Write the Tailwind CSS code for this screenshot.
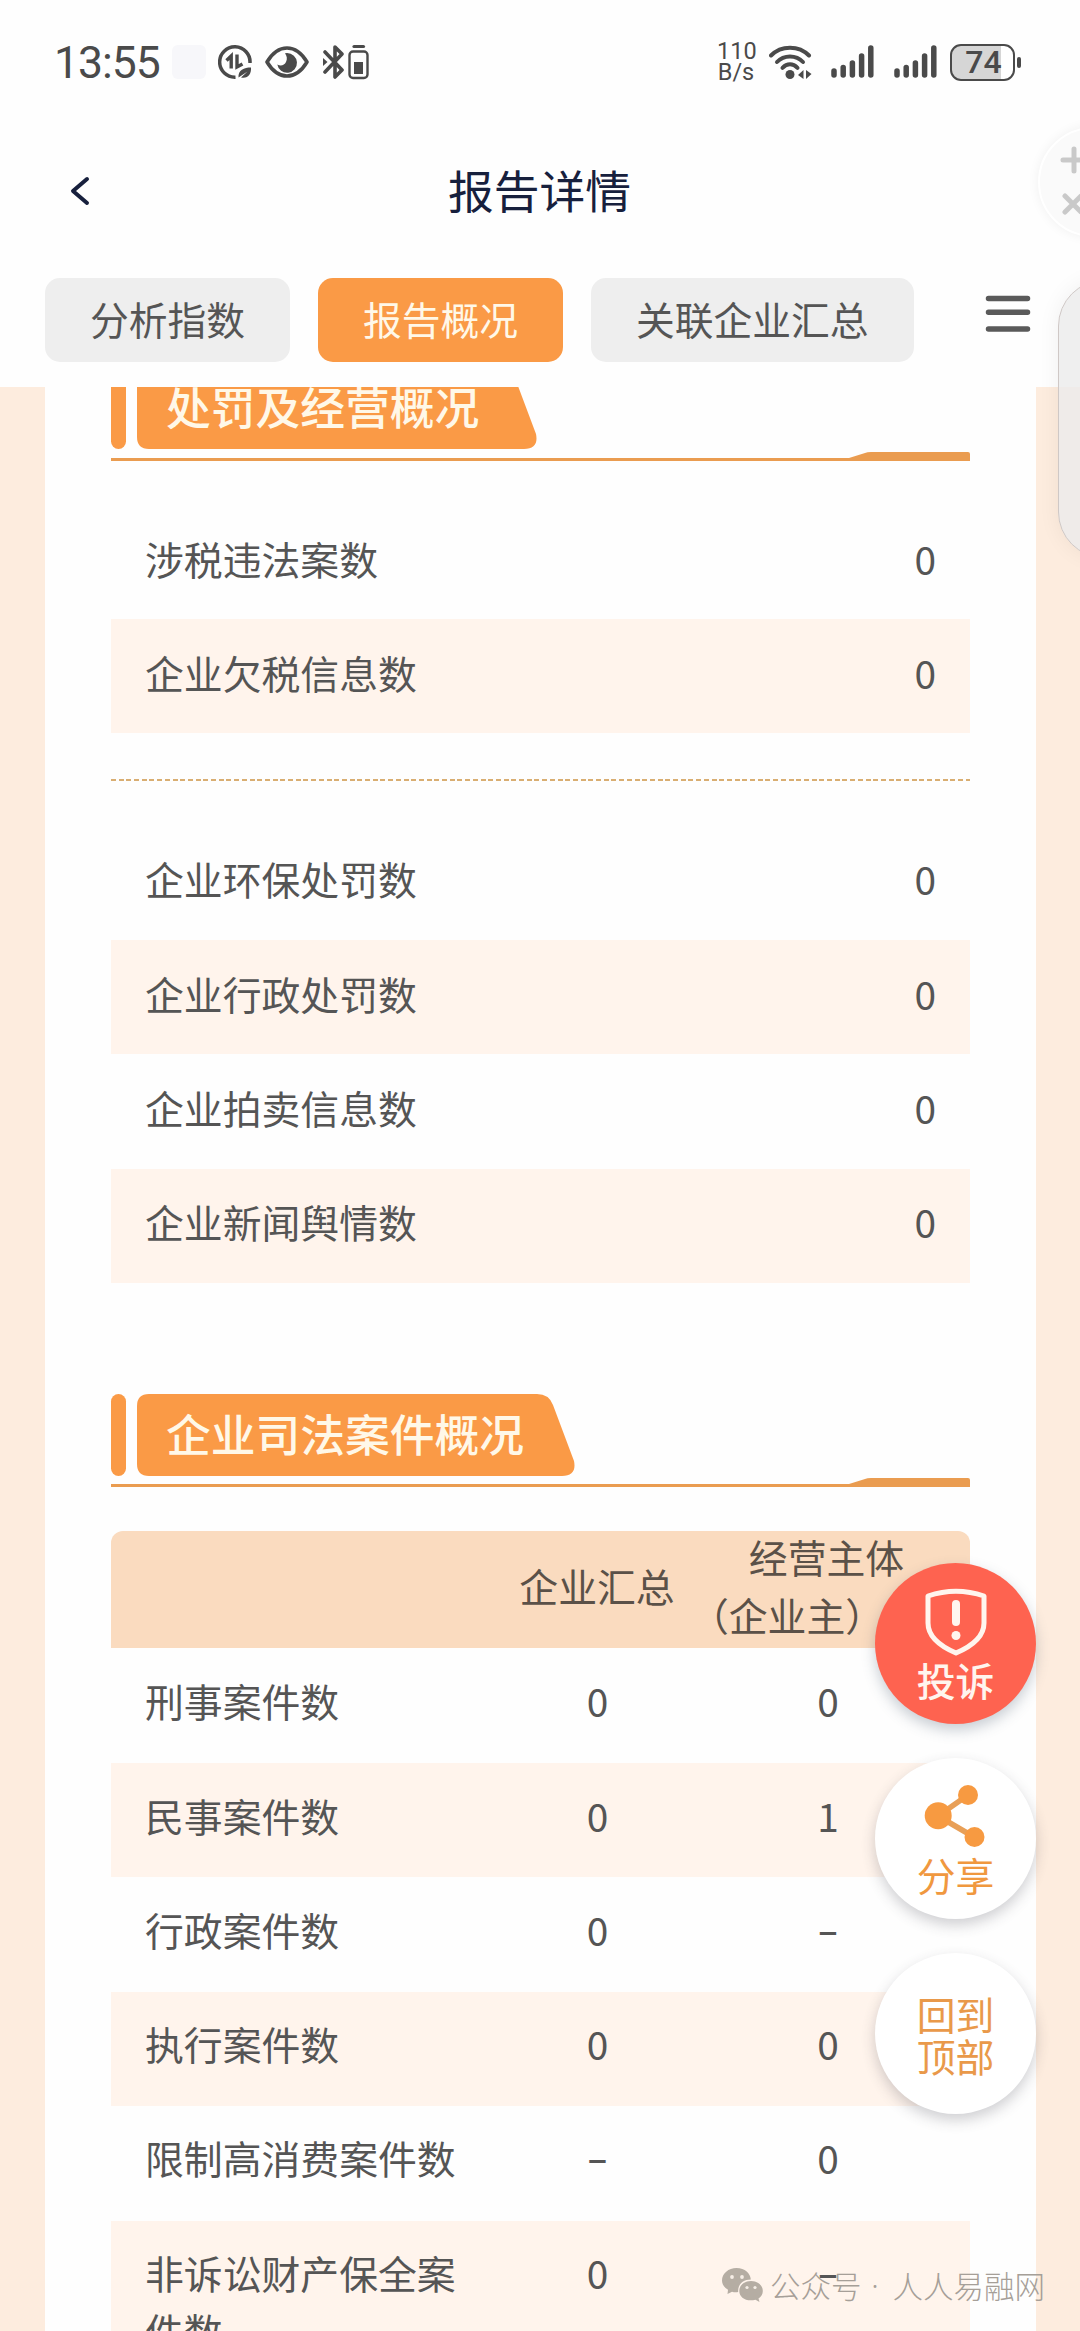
<!DOCTYPE html>
<html lang="zh-CN">
<head>
<meta charset="utf-8">
<title>报告详情</title>
<script src="https://cdn.jsdelivr.net/npm/@tailwindcss/browser@4"></script>
</head>
<body class="bg-white">
<div class="relative w-[1080px] h-[2331px] overflow-hidden bg-[#fefefe] text-[#555] text-[38.85px] font-['Noto_Sans_CJK_SC',sans-serif]">

  <!-- Status bar -->
  <header class="flex h-[124px] items-center pl-[54px] text-[#4a4a4a]">
    <span class="w-[108px] font-[Roboto,sans-serif] text-[44.5px] leading-[50px] tracking-[-1px] pt-[2px] whitespace-nowrap">13:55</span>
    <span class="ml-[10px] h-[34px] w-[34px] rounded-md bg-[#f7f7fa]"></span>
    <svg class="ml-[12px]" width="34" height="36" viewBox="0 0 34 36" fill="none" stroke="#4a4a4a">
      <path d="M32 19 A15.2 15.2 0 1 0 17.500 33.200" stroke-width="3.500"/>
      <path d="M8.500 16.500 L13.200 12 V24.500" stroke-width="3.400"/>
      <path d="M19 10.500 V23 L24.500 20" stroke-width="3.400"/>
      <path d="M20.500 33.500 C20 26 26 23.500 33 23.500 C33.500 30 30 35 23 33.500 L29.500 27.500 L20.500 33.500Z" fill="#4a4a4a" stroke="none"/>
    </svg>
    <svg class="ml-[13px]" width="44" height="32" viewBox="0 0 44 32" fill="none">
      <path d="M2 16 C8 6 15 2 22 2 C29 2 36 6 42 16 C36 26 29 30 22 30 C15 30 8 26 2 16Z" stroke="#4a4a4a" stroke-width="3.600" stroke-linejoin="round"/>
      <path d="M22 7 A9.900 9.900 0 1 1 12.300 18.500 C16 20.500 19.500 19 21 16 C22.500 13 22 10 20 7.200Z" fill="#4a4a4a"/>
    </svg>
    <svg class="ml-[14px]" width="46" height="36" viewBox="0 0 46 36" fill="none" stroke="#4a4a4a">
      <path d="M2 8 L19 26 L12 33 V3 L19 10 L2 28" stroke-width="3.600" stroke-linejoin="round" stroke-linecap="round"/>
      <path d="M0 14 L4.500 18 L0 22Z" fill="#4a4a4a" stroke="none"/>
      <rect x="26.500" y="7.500" width="18" height="26.500" rx="3.500" stroke-width="2.400"/>
      <path d="M31 2.500 H40.500" stroke-width="3.200" stroke-linecap="round"/>
      <rect x="31" y="18" width="9" height="12" fill="#4a4a4a" stroke="none"/>
    </svg>
    <span class="ml-[348px] w-[38px] text-center font-[Roboto,sans-serif] text-[23.500px] leading-[21px]">110<br>B/s</span>
    <svg class="ml-[14px]" width="44" height="36" viewBox="0 0 44 36" fill="none" stroke="#4a4a4a" stroke-width="4" stroke-linecap="round">
      <path d="M2 11.500 C12 1 30 1 40 11.500"/><path d="M8 18 C15 10.500 27 10.500 34 18"/><path d="M13.500 23.800 C18 19.200 24 19.200 28.500 23.800"/>
      <circle cx="21" cy="30.500" r="4.500" fill="#4a4a4a" stroke="none"/>
      <path d="M29 31 L34.500 26 V35Z M42.500 30 L37 26 V35Z" fill="#4a4a4a" stroke="none"/>
    </svg>
    <svg class="ml-[18px]" width="43" height="36" viewBox="0 0 43 36" stroke="#4a4a4a" stroke-width="5.500" stroke-linecap="round">
      <path d="M3 27 V31 M12.200 23.500 V31 M21.400 19 V31 M30.600 12 V31 M39.800 4 V31"/>
    </svg>
    <svg class="ml-[20px]" width="43" height="36" viewBox="0 0 43 36" stroke="#4a4a4a" stroke-width="5.500" stroke-linecap="round">
      <path d="M3 27 V31 M12.200 23.500 V31 M21.400 19 V31 M30.600 12 V31 M39.800 4 V31"/>
    </svg>
    <span class="ml-[13px] flex h-[37px] w-[65px] items-center justify-center rounded-[11px] border-[2.500px] border-[#4a4a4a] bg-linear-to-r from-[#d6d6d6] from-80% to-white to-80% pl-[2px] font-[Roboto,sans-serif] text-[32px] font-medium leading-none">74</span>
    <span class="ml-[2px] h-[11px] w-[4px] rounded-full bg-[#4a4a4a]"></span>
  </header>

  <!-- Title bar -->
  <div class="flex h-[136px] items-center pl-[70px] text-[#17203d]">
    <svg class="-mt-[3px]" width="20" height="30" viewBox="0 0 20 30" fill="none" stroke="#17203d" stroke-width="4" stroke-linecap="round" stroke-linejoin="round"><path d="M17 3 L3 15 L17 27"/></svg>
    <h1 class="ml-[358px] text-[45.750px] leading-[60px] -mt-[7px]">报告详情</h1>
  </div>

  <!-- Tabs -->
  <nav class="flex h-[127px] items-start pt-[18px] pl-[45px] text-[38.750px]">
    <a class="flex h-[84px] items-center rounded-[15px] bg-[#eeeeee] px-[45px] pb-[3px]">分析指数</a>
    <a class="ml-[28px] flex h-[84px] items-center rounded-[15px] bg-[#fa9a46] px-[45px] pb-[3px] text-[#fff8e8]">报告概况</a>
    <a class="ml-[28px] flex h-[84px] items-center rounded-[15px] bg-[#eeeeee] px-[45px] pb-[3px]">关联企业汇总</a>
    <svg class="ml-[71px] mt-[15px]" width="46" height="42" viewBox="0 0 46 42" stroke="#5a5a5a" stroke-width="5.500" stroke-linecap="round"><path d="M3.500 5.500 H42.500 M3.500 19.300 H42.500 M3.500 36 H42.500"/></svg>
  </nav>

  <!-- Report body -->
  <main class="h-[1944px] overflow-hidden bg-[#fdecde] pr-[44px] pl-[45px]">
    <div class="h-[1944px] overflow-hidden bg-[#fefefe] pr-[66px] pl-[66px]">

      <section class="-mt-[20px]">
        <div class="flex gap-[11px]">
          <span class="h-[82px] w-[15px] rounded-full bg-[#fa9a46]"></span>
          <div class="relative h-[82px] w-[400px]">
            <svg class="absolute inset-0" width="400" height="82" viewBox="0 0 400 82"><path d="M12 0 H362 Q374 0 378 11 L399 67 Q402 82 387 82 H12 Q0 82 0 70 V12 Q0 0 12 0Z" fill="#fa9a46"/></svg>
            <h2 class="relative pl-[29px] text-[44.750px] font-medium leading-[77px] text-[#fff8e8]">处罚及经营概况</h2>
          </div>
        </div>
        <svg class="mt-[3px] block" width="859" height="9" viewBox="0 0 859 9"><path d="M0 6 H738 L754 1 Q756 0 760 0 H857 Q859 0 859 2 V9 H0Z" fill="#ea9c50"/></svg>

        <div class="mt-[43px]">
          <div class="flex h-[115px] items-center justify-between pr-[34px] pb-[7px] pl-[34px]"><span>涉税违法案数</span><span>0</span></div>
          <div class="flex h-[114px] items-center justify-between bg-[#fff4ec] pr-[34px] pb-[7px] pl-[34px]"><span>企业欠税信息数</span><span>0</span></div>
        </div>
        <div class="mt-[46px] h-[2px] bg-[repeating-linear-gradient(90deg,#d9ae72_0_5px,transparent_5px_7.700px)]"></div>
        <div class="mt-[43px]">
          <div class="flex h-[116px] items-center justify-between pr-[34px] pb-[8px] pl-[34px]"><span>企业环保处罚数</span><span>0</span></div>
          <div class="flex h-[114px] items-center justify-between bg-[#fff4ec] pr-[34px] pb-[8px] pl-[34px]"><span>企业行政处罚数</span><span>0</span></div>
          <div class="flex h-[115px] items-center justify-between pr-[34px] pb-[8px] pl-[34px]"><span>企业拍卖信息数</span><span>0</span></div>
          <div class="flex h-[114px] items-center justify-between bg-[#fff4ec] pr-[34px] pb-[9px] pl-[34px]"><span>企业新闻舆情数</span><span>0</span></div>
        </div>
      </section>

      <section class="mt-[111px]">
        <div class="flex gap-[11px]">
          <span class="h-[82px] w-[15px] rounded-full bg-[#fa9a46]"></span>
          <div class="relative h-[82px] w-[438px]">
            <svg class="absolute inset-0" width="438" height="82" viewBox="0 0 438 82"><path d="M12 0 H400 Q412 0 416 11 L437 67 Q440 82 425 82 H12 Q0 82 0 70 V12 Q0 0 12 0Z" fill="#fa9a46"/></svg>
            <h2 class="relative pl-[29px] text-[44.750px] font-medium leading-[77px] text-[#fff8e8]">企业司法案件概况</h2>
          </div>
        </div>
        <svg class="mt-[2px] block" width="859" height="9" viewBox="0 0 859 9"><path d="M0 6 H738 L754 1 Q756 0 760 0 H857 Q859 0 859 2 V9 H0Z" fill="#ea9c50"/></svg>

        <div class="mt-[44px] grid h-[117px] grid-cols-[371px_230px_258px] items-center rounded-t-[12px] bg-[#fadbbf] text-center leading-[58.500px] text-[#5b5148]">
          <span></span>
          <span class="-mt-[9px]">企业汇总</span>
          <span class="-mt-[9px] -ml-[29px]">经营主体<br><span class="pr-[79px]">（企业主）</span></span>
        </div>
        <div class="grid h-[115px] grid-cols-[371px_231px_230px] pt-[23px] text-center leading-[58px]"><span class="pl-[34px] text-left">刑事案件数</span><span>0</span><span>0</span></div>
        <div class="grid h-[114px] grid-cols-[371px_231px_230px] bg-[#fff4ec] pt-[23px] text-center leading-[58px]"><span class="pl-[34px] text-left">民事案件数</span><span>0</span><span>1</span></div>
        <div class="grid h-[115px] grid-cols-[371px_231px_230px] pt-[23px] text-center leading-[58px]"><span class="pl-[34px] text-left">行政案件数</span><span>0</span><span class="font-['Noto_Sans']">–</span></div>
        <div class="grid h-[114px] grid-cols-[371px_231px_230px] bg-[#fff4ec] pt-[22px] text-center leading-[58px]"><span class="pl-[34px] text-left">执行案件数</span><span>0</span><span>0</span></div>
        <div class="grid h-[115px] grid-cols-[371px_231px_230px] pt-[22px] text-center leading-[58px]"><span class="pl-[34px] text-left">限制高消费案件数</span><span class="font-['Noto_Sans']">–</span><span>0</span></div>
        <div class="grid h-[172px] grid-cols-[371px_231px_230px] bg-[#fff4ec] pt-[22px] text-center leading-[58px]"><span class="pl-[34px] text-left">非诉讼财产保全案件数</span><span>0</span><span class="font-['Noto_Sans']">–</span></div>
      </section>
    </div>
  </main>

  <!-- Floating actions -->
  <div class="absolute top-[1563px] left-[875px] flex w-[161px] flex-col gap-[34px]">
    <button class="flex h-[161px] flex-col items-center rounded-full bg-[#fe6350] pt-[24px] text-white shadow-[0_6px_14px_rgba(60,80,100,0.28)]">
      <svg width="64" height="70" viewBox="0 0 64 70" fill="none" stroke="#fff5ee" stroke-width="5" stroke-linejoin="round"><path d="M4 9 Q32 -0.500 60 9 V36 Q60 54 32 66 Q4 54 4 36Z"/><path d="M32 17 V35" stroke-width="8" stroke-linecap="round"/><circle cx="32" cy="48.500" r="4.500" fill="#fff5ee" stroke="none"/></svg>
      <span class="mt-[2px] leading-[40px] font-medium text-[#fff5ee]">投诉</span>
    </button>
    <button class="flex h-[161px] flex-col items-center rounded-full bg-white pt-[24px] text-[#f0983f] shadow-[0_6px_14px_rgba(60,60,70,0.24)]">
      <svg width="64" height="70" viewBox="0 0 64 70" fill="#f79a41" stroke="#e89f57" stroke-width="5.500"><path d="M14 34 L44 13 M14 34 L50 55"/><g stroke="none"><circle cx="14.200" cy="33.700" r="13.500"/><circle cx="44" cy="13" r="10"/><circle cx="50.500" cy="55" r="10"/></g></svg>
      <span class="mt-[2px] leading-[40px]">分享</span>
    </button>
    <button class="flex h-[161px] items-center justify-center rounded-full bg-white text-[#e9994a] leading-[42px] shadow-[0_6px_14px_rgba(60,60,70,0.24)]"><span>回到<br>顶部</span></button>
  </div>

  <!-- Edge assistant bubble and side panel -->
  <div class="absolute top-[127px] left-[1038px] h-[110px] w-[110px] rounded-full border-2 border-white bg-[#fafafa] shadow-[0_0_12px_rgba(0,0,0,0.06)]">
    <svg width="60" height="110" viewBox="0 0 60 110" fill="none" stroke="#c9c9c9" stroke-width="5" stroke-linecap="round"><path d="M23 31 H47 M34 20 V42 M25 67 L41 83 M41 67 L25 83"/></svg>
  </div>
  <div class="absolute top-[280px] left-[1058px] h-[278px] w-[100px] rounded-[46px] border border-[#cfc8c6] bg-[#ebebeb]/80 shadow-[0_0_22px_rgba(0,0,0,0.06)]"></div>

  <!-- Account signature -->
  <div class="absolute top-[2265px] left-[721px] flex items-center text-[30.500px] font-light leading-[40px] text-[#a69f98]">
    <svg width="43" height="36" viewBox="0 0 43 36" fill="#b5ada3"><path d="M15.500 1 C24 1 29.500 6.500 29.800 12.500 C22 12.500 16.500 17.500 17.200 25 Q14 25.600 11 24.700 L6.500 27 L7 22.800 C3 20.500 1 17 1 13.500 C1 6.500 7.500 1 15.500 1Z"/><path d="M30 14 C37 14 41.800 18.500 41.800 24 C41.800 27 40.300 29.500 37.500 31.500 L38.500 35 L34.500 32.800 C25 35 18.300 30.500 18.300 24 C18.300 18.500 23 14 30 14Z"/><g fill="#f6eee6"><circle cx="11" cy="10" r="1.900"/><circle cx="21" cy="10" r="1.900"/><circle cx="26" cy="20.500" r="1.600"/><circle cx="34" cy="20.500" r="1.600"/></g></svg>
    <span class="ml-[6px] whitespace-nowrap">公众号</span>
    <span class="w-[31px] pr-[4px] text-center font-['Noto_Sans']">·</span>
    <span class="whitespace-nowrap">人人易融网</span>
  </div>
</div>
</body>
</html>
